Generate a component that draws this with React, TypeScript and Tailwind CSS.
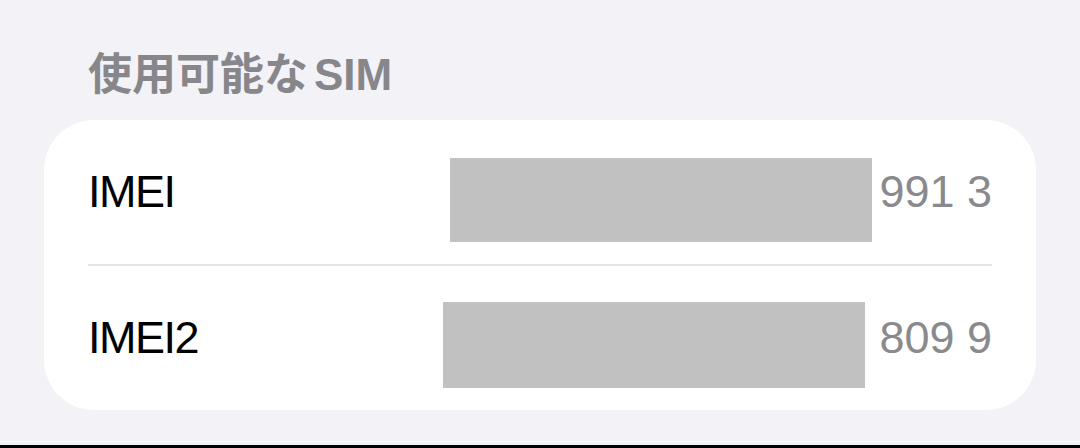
export default function App() {
  const rows = [
    { label: 'IMEI', value: '991 3', box: 'right-[164px] top-[38px] h-[84px] w-[422px]' },
    { label: 'IMEI2', value: '809 9', box: 'right-[171px] top-[36px] h-[86px] w-[422px]' },
  ]

  return (
    <div
      className="flex h-[448px] w-[1080px] flex-col overflow-hidden bg-[#f2f2f7]"
      style={{ fontFamily: '"Liberation Sans", "Noto Sans CJK JP", sans-serif' }}
    >
      <div className="pl-[88px] pt-[48px] text-[44px] font-semibold leading-[53px] text-[#86868b]">
        使用可能な<span className="ml-[6px]">SIM</span>
      </div>

      <div className="mx-[44px] mt-[19px] h-[290px] rounded-[50px] bg-white">
        {rows.map((row, i) => (
          <div key={row.label}>
            {i > 0 && <div className="mx-[44px] h-[2px] bg-[#e4e4e9]" />}
            <div className="relative flex h-[144px] items-center justify-between px-[44px] text-[45px]">
              <span className="tracking-[-1.5px] text-black">{row.label}</span>
              <span className="text-[#8a8a8e]">{row.value}</span>
              {/* redaction */}
              <div className={`absolute bg-[#c1c1c1] ${row.box}`} />
            </div>
          </div>
        ))}
      </div>

      <div className="mt-auto">
        <div className="h-[1px] bg-white" />
        <div className="h-[3px]" />
        <div className="h-[3px] bg-black" />
      </div>
    </div>
  )
}
